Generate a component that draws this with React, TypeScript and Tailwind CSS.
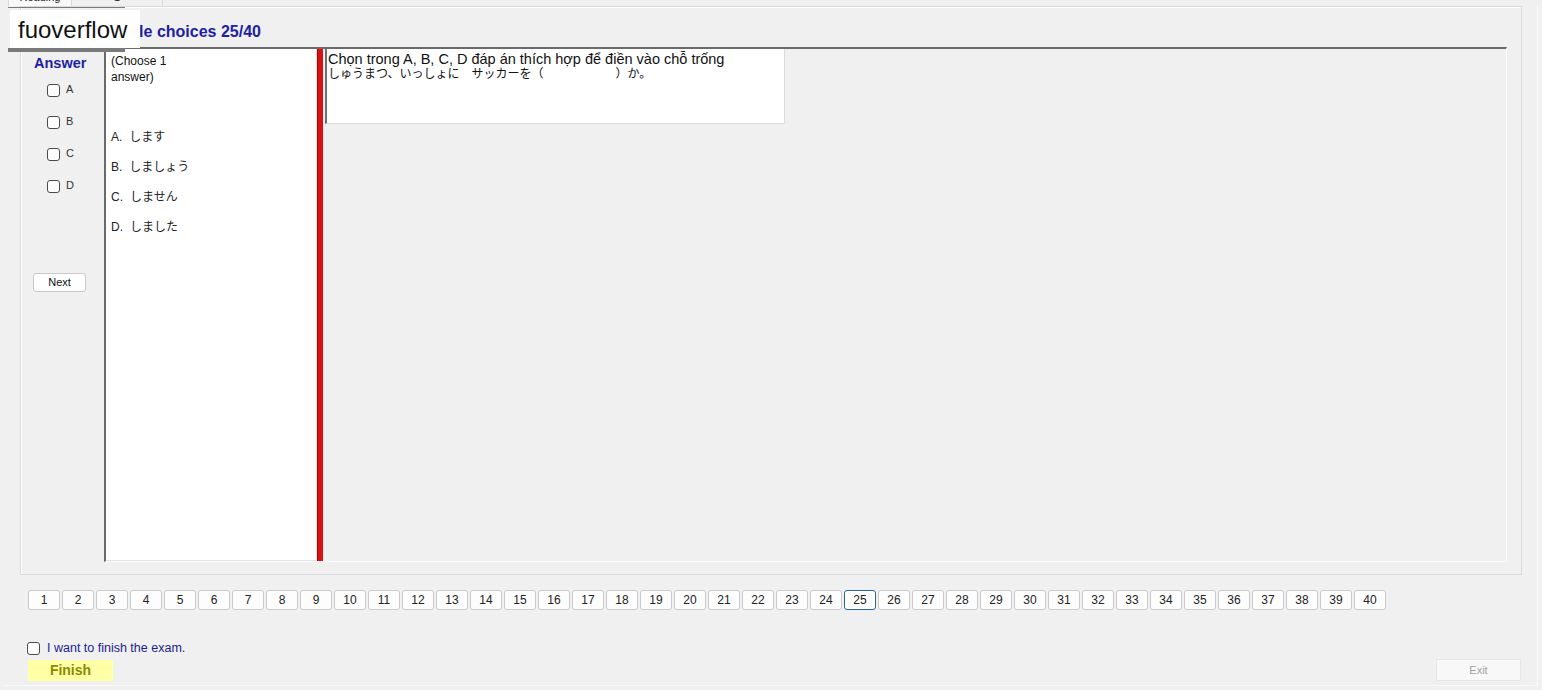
const answers = ['A', 'B', 'C', 'D'];

const options = [
  { key: 'A', text: 'します' },
  { key: 'B', text: 'しましょう' },
  { key: 'C', text: 'しません' },
  { key: 'D', text: 'しました' },
];

const questions = Array.from({ length: 40 }, (_, i) => i + 1);
const current = 25;

function CheckBox() {
  return <span className="inline-block w-[13px] h-[13px] shrink-0 rounded-[3px] border border-[#4a4a4a] bg-white" />;
}

function TabStrip() {
  return (
    <div className="flex h-[6px] overflow-hidden">
      <div className="ml-[8px] w-[64px] bg-[#f9f9f9] border-x border-[#d9d9d9] text-center">
        <div className="-mt-[9px] text-[11px] leading-[13px] text-[#222]">Reading</div>
      </div>
      <div className="w-[91px] border-r border-[#d9d9d9] text-center">
        <div className="-mt-[9px] text-[11px] leading-[13px] text-[#222]">1</div>
      </div>
    </div>
  );
}

function AnswerColumn() {
  return (
    <div className="w-[83px] shrink-0 flex flex-col">
      <div className="pt-[8px] pl-[13px] text-[14.5px] leading-[17px] font-bold text-[#1e1ea6]">Answer</div>
      <div className="mt-[2px] flex flex-col">
        {answers.map((a) => (
          <div key={a} className="h-[32px] flex items-center pl-[26px] gap-[6px]">
            <CheckBox />
            <span className="text-[11px] text-[#333] -mt-[1px]">{a}</span>
          </div>
        ))}
      </div>
      <button className="mt-[71px] ml-[12px] w-[53px] h-[19px] bg-white border border-[#c9c9c9] rounded-[3px] text-[11px] text-[#111] leading-[17px]">
        Next
      </button>
    </div>
  );
}

function QuestionPanel() {
  return (
    <div className="flex-1 flex border-t-2 border-l-2 border-[#6a6a6a] border-r border-b border-r-[#fbfbfb] border-b-[#fbfbfb]">
      {/* choices list */}
      <div className="w-[210px] bg-white pl-[5px] pt-[4px] border-b border-[#e2e2e2]">
        <div className="text-[12px] leading-[16px] text-[#111]">
          (Choose 1
          <br />
          answer)
        </div>
        <div className="mt-[37px] flex flex-col">
          {options.map((o) => (
            <div key={o.key} className="h-[30px] flex items-center text-[#222]">
              <span className="text-[12px]">{o.key}.</span>
              <span className="ml-[7px] text-[12px]">{o.text}</span>
            </div>
          ))}
        </div>
      </div>

      {/* splitter */}
      <div className="w-[7px] flex">
        <div className="w-[1px] bg-[#f6dede]" />
        <div className="w-[6px] bg-[#d81212] border-l border-[#9a0c0c]" />
      </div>

      {/* question text */}
      <div className="flex-1 pl-[2px]">
        <div className="w-[460px] h-[75px] bg-white border-l-2 border-[#6f6f6f] border-r border-b border-r-[#dcdcdc] border-b-[#dcdcdc] pl-[1px] pt-[3px]">
          <div className="text-[14.5px] leading-[15px] text-[#111]">Chọn trong A, B, C, D đáp án thích hợp để điền vào chỗ trống</div>
          <div className="text-[12px] leading-[15px] text-[#111]">しゅうまつ、いっしょに　サッカーを（　　　　　　）か。</div>
        </div>
      </div>
    </div>
  );
}

function QuestionNav() {
  return (
    <div className="mt-[15px] ml-[25px] flex gap-[2px]">
      {questions.map((n) => (
        <button
          key={n}
          className={
            n === current
              ? 'w-[32px] h-[20px] bg-white rounded-[3px] border border-[#2a6698] text-[12px] text-[#222] leading-[18px]'
              : 'w-[32px] h-[20px] bg-[#fdfdfd] rounded-[3px] border border-[#cacaca] text-[12px] text-[#222] leading-[18px]'
          }
        >
          {n}
        </button>
      ))}
    </div>
  );
}

export default function App() {
  return (
    <div className="relative w-[1542px] h-[690px] overflow-hidden bg-[#f0f0f0] font-['Liberation_Sans','Noto_Sans_CJK_JP',sans-serif]">
      <TabStrip />

      <div className="ml-[3px] w-[1535px] h-[680px] flex flex-col border-r border-b border-[#fafafa]">
        {/* exam group */}
        <div className="ml-[17px] w-[1502px] h-[569px] border border-[#dadada] shadow-[inset_1px_1px_0_#ffffff] flex flex-col">
          <div className="h-[40px] pl-[71px] pt-[16px] text-[16px] leading-[18px] font-bold text-[#1e1ea6]">
            Multiple choices 25/40
          </div>
          <div className="h-[515px] flex mr-[14px]">
            <AnswerColumn />
            <QuestionPanel />
          </div>
        </div>

        <QuestionNav />

        <label className="mt-[30px] ml-[24px] flex items-center gap-[7px] h-[16px]">
          <CheckBox />
          <span className="text-[12.5px] text-[#1c1c8c] mt-[1px]">I want to finish the exam.</span>
        </label>

        <div className="mt-[3px] ml-[25px] mr-[16px] flex justify-between items-start">
          <button className="mt-[1px] w-[85px] h-[21px] bg-[#ffffa6] text-[14px] font-bold text-[#8a8a00] leading-[21px]">
            Finish
          </button>
          <button className="w-[85px] h-[22px] bg-[#f8f8f8] border border-[#e6e6e6] text-[11px] text-[#a0a0a0] leading-[20px]">
            Exit
          </button>
        </div>
      </div>

      {/* watermark label */}
      <div className="absolute left-[8px] top-[7px] w-[117px] h-[45px] border-t border-b-4 border-[#7a7a7a]">
        <div className="ml-[2px] mt-[2px] w-[130px] h-[38px] bg-white pl-[8px] pt-[2px] text-[24px] leading-[36px] text-[#111]">
          fuoverflow
        </div>
      </div>
    </div>
  );
}
